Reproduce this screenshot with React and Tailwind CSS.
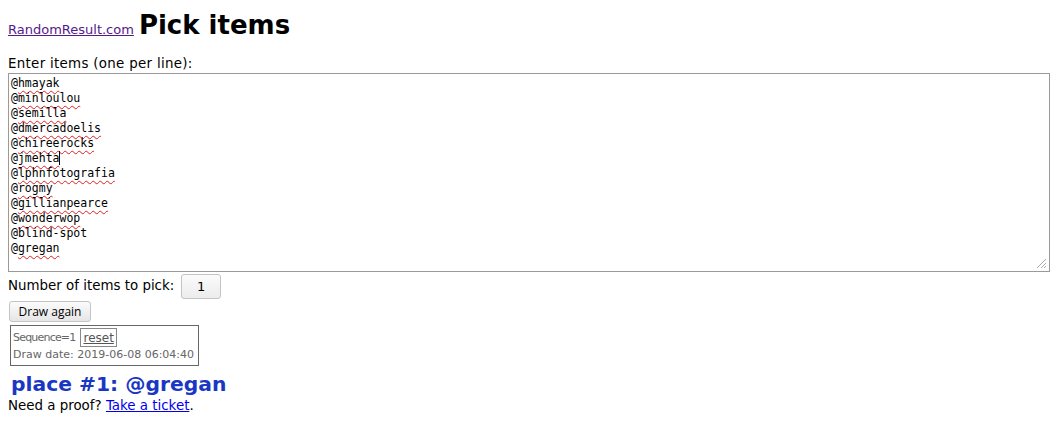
const ITEMS = [
  ['@', 'hmayak', true],
  ['@', 'minloulou', true],
  ['@', 'semilla', true],
  ['@', 'dmercadoelis', true],
  ['@', 'chireerocks', true],
  ['@', 'jmehta', true],
  ['@', 'lphnfotografia', true],
  ['@', 'rogmy', true],
  ['@', 'gillianpearce', true],
  ['@', 'wonderwop', true],
  ['@', 'blind-spot', false],
  ['@', 'gregan', true],
]

export default function App() {
  return (
    <div className="bg-white min-h-[438px] px-2 pt-2 text-[13.4px] text-black" style={{ fontFamily: '"DejaVu Sans", Verdana, sans-serif' }}>
      <h1 className="flex items-baseline gap-[5px] leading-[34px] h-[36px]">
        <a href="#" className="text-[13px] text-[#551a8b] underline font-normal">RandomResult.com</a>
        <span className="text-[26px] font-bold">Pick items</span>
      </h1>

      <div className="mt-[12px] leading-[16px] tracking-[0.3px]">Enter items (one per line):</div>

      <div className="relative mt-px h-[199px] w-[1042px] border border-[#9a9a9a] px-[2px] pt-[2px] text-[11.5px] leading-[15px]" style={{ fontFamily: '"DejaVu Sans Mono", monospace' }}>
        {ITEMS.map(([at, name, bad], i) => (
          <div key={i} className="whitespace-pre">
            {at}
            <span className={bad ? 'underline decoration-wavy decoration-[#e02020] decoration-1 underline-offset-[3px]' : ''}>{name}</span>
            {name === 'jmehta' && <span className="inline-block w-px h-[14px] bg-black align-[-3px]" />}
          </div>
        ))}
        <svg className="absolute right-[2px] bottom-[2px]" width="11" height="11" viewBox="0 0 11 11">
          <path d="M10 1 L1 10 M10 5 L5 10 M10 8 L8 10" stroke="#a8a8a8" strokeWidth="1" fill="none" />
        </svg>
      </div>

      <div className="flex items-center mt-[2px] h-[25px]">
        <span>Number of items to pick:</span>
        <div className="ml-[7px] w-[40px] h-[25px] border border-[#c4c4c4] rounded-[3px] bg-gradient-to-b from-[#fbfbfb] to-[#ececec] flex items-center justify-center text-[13px]">1</div>
      </div>

      <button className="block mt-[2px] ml-px h-[21px] w-[82px] border border-[#c4c4c4] rounded-[3px] bg-gradient-to-b from-[#fbfbfb] to-[#e6e6e6] text-[12px] leading-none" style={{ fontFamily: '"Open Sans", "DejaVu Sans", sans-serif' }}>Draw again</button>

      <div className="mt-[3px] ml-[2px] w-[189px] border border-[#666] px-[2px] pt-[2px] pb-[2px] text-[11px] text-[#666] leading-[16px] whitespace-nowrap">
        <div className="flex items-center">
          <span className="tracking-[-0.8px]">Sequence=1</span>
          <span className="ml-[5px] border border-[#888] px-[2px] h-[19px] leading-[18px] text-[12px] underline text-[#555]">reset</span>
        </div>
        <div>Draw date: 2019-06-08 06:04:40</div>
      </div>

      <div className="mt-[6px] ml-[3px] text-[20.3px] font-bold text-[#1a37c4] leading-[24px]">place #1: @gregan</div>
      <div className="mt-[2px] leading-[16px]">
        Need a proof? <a href="#" className="text-[#0000ee] underline">Take a ticket</a>.
      </div>
    </div>
  )
}
